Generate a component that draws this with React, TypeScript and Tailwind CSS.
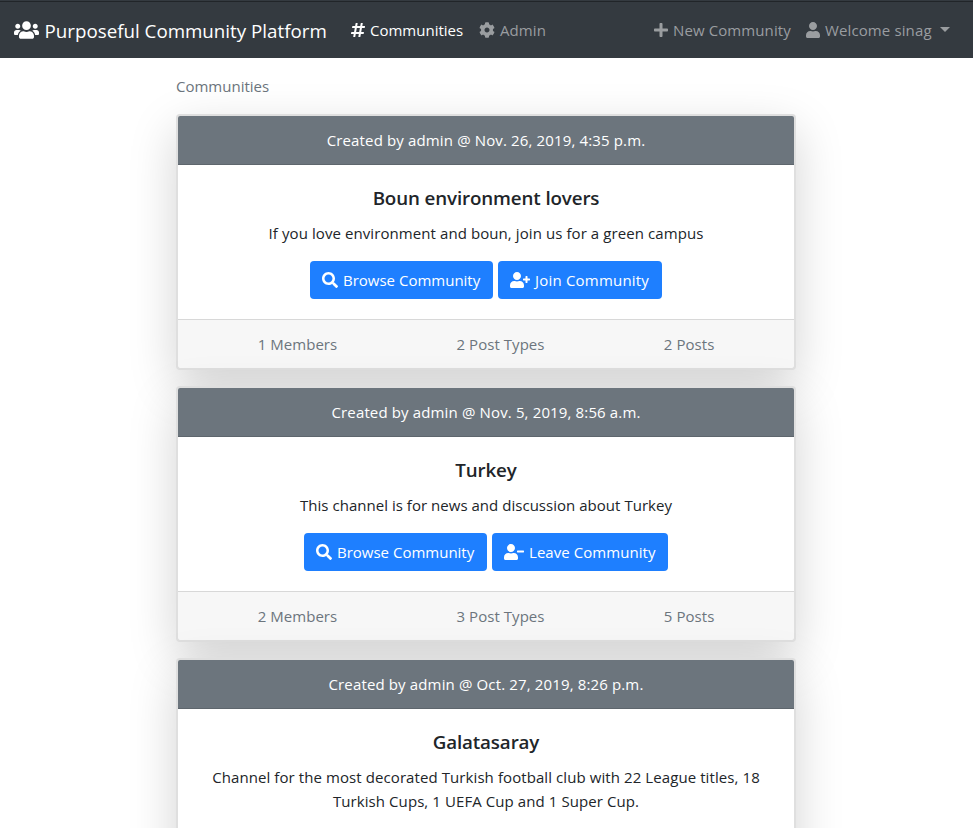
import type { ReactNode } from "react";
import type { IconType } from "react-icons";
import { FaUsers, FaHashtag, FaCog, FaPlus, FaUser, FaSearch, FaUserPlus, FaUserMinus } from "react-icons/fa";

type Community = {
  created: string;
  name: string;
  description: string;
  tracking: string;
  joined?: boolean;
  stats?: string[];
};

const communities: Community[] = [
  {
    created: "Created by admin @ Nov. 26, 2019, 4:35 p.m.",
    name: "Boun environment lovers",
    description: "If you love environment and boun, join us for a green campus",
    tracking: "tracking-[0.085px]",
    joined: false,
    stats: ["1 Members", "2 Post Types", "2 Posts"],
  },
  {
    created: "Created by admin @ Nov. 5, 2019, 8:56 a.m.",
    name: "Turkey",
    description: "This channel is for news and discussion about Turkey",
    tracking: "tracking-[0.03px]",
    joined: true,
    stats: ["2 Members", "3 Post Types", "5 Posts"],
  },
  {
    created: "Created by admin @ Oct. 27, 2019, 8:26 p.m.",
    name: "Galatasaray",
    description:
      "Channel for the most decorated Turkish football club with 22 League titles, 18 Turkish Cups, 1 UEFA Cup and 1 Super Cup.",
    tracking: "tracking-[0.085px]",
  },
];

function NavLink({ icon: Icon, iconClass, className, children }: { icon: IconType; iconClass: string; className: string; children: ReactNode }) {
  return (
    <a className={`flex items-center whitespace-nowrap ${className}`}>
      <Icon className={`mr-[5px] h-4 shrink-0 ${iconClass}`} />
      {children}
    </a>
  );
}

function Button({ icon: Icon, iconClass, className, children }: { icon: IconType; iconClass: string; className: string; children: ReactNode }) {
  return (
    <button className={`flex h-[38px] items-center whitespace-nowrap rounded bg-[#1e7fff] pl-3 text-white ${className}`}>
      <Icon className={`mr-[5px] h-4 shrink-0 ${iconClass}`} />
      {children}
    </button>
  );
}

function CommunityCard({ community }: { community: Community }) {
  return (
    <article className="relative min-h-[280px] rounded border-2 border-black/[0.125] bg-white text-center shadow-[0_16px_48px_rgba(0,0,0,0.175)] [&:has(footer)]:min-h-0">
      <header className="h-[49px] rounded-t-[2px] border-b border-black/[0.125] bg-[#6c757d] py-3 tracking-[0.14px] text-white">
        {community.created}
      </header>
      <div className="p-5">
        <h5 className="mb-[11px] pt-px text-[18.75px] font-semibold leading-6 tracking-[-0.12px]">{community.name}</h5>
        <p className={`mb-4 ${community.tracking}`}>{community.description}</p>
        {community.stats && (
          <div className="flex justify-center gap-[5px]">
            <Button icon={FaSearch} iconClass="w-4" className="w-[183px]">Browse Community</Button>
            {community.joined ? (
              <Button icon={FaUserMinus} iconClass="w-5" className="w-[176px] tracking-[0.06px]">Leave Community</Button>
            ) : (
              <Button icon={FaUserPlus} iconClass="w-5" className="w-[164px] tracking-[0.2px]">Join Community</Button>
            )}
          </div>
        )}
      </div>
      {community.stats && (
        <footer className="flex justify-around border-t border-black/[0.125] bg-black/[0.03] px-5 py-3 text-[#6c757d]">
          {community.stats.map((stat) => (
            <span key={stat} className="tracking-[0.05px]">{stat}</span>
          ))}
        </footer>
      )}
    </article>
  );
}

export default function App() {
  return (
    <div className="h-[828px] overflow-hidden bg-white font-['Open_Sans','Noto_Sans',sans-serif] text-[15px] leading-6 text-[#212529]">
      <nav className="flex h-[58px] items-center border-t border-[#343a40] bg-[#343a40] pl-[14px] pr-[23px] text-[#9a9da0] shadow-[inset_0_1px_0_#212529]">
        <a className="flex w-[337px] items-center whitespace-nowrap text-[18.75px] text-white">
          <FaUsers className="mr-[5.5px] h-5 w-[25px] shrink-0" />
          <span className="pt-0.5">Purposeful Community Platform</span>
        </a>
        <NavLink icon={FaHashtag} iconClass="w-[14px]" className="w-[128px] text-white">Communities</NavLink>
        <NavLink icon={FaCog} iconClass="w-4" className="mr-auto tracking-[0.1px]">Admin</NavLink>
        <NavLink icon={FaPlus} iconClass="w-[14px]" className="w-[152px] tracking-[0.1px]">New Community</NavLink>
        <NavLink icon={FaUser} iconClass="w-[14px]" className="w-[144px] tracking-[0.12px]">
          Welcome sinag
          <span className="ml-auto border-x-[5px] border-t-[5px] border-x-transparent border-t-current" />
        </NavLink>
      </nav>
      <main className="ml-[176px] w-[620px] pt-4">
        <div className="mb-4 text-[#6c757d]">Communities</div>
        <div className="flex flex-col gap-4">
          {communities.map((community) => (
            <CommunityCard key={community.name} community={community} />
          ))}
        </div>
      </main>
    </div>
  );
}
